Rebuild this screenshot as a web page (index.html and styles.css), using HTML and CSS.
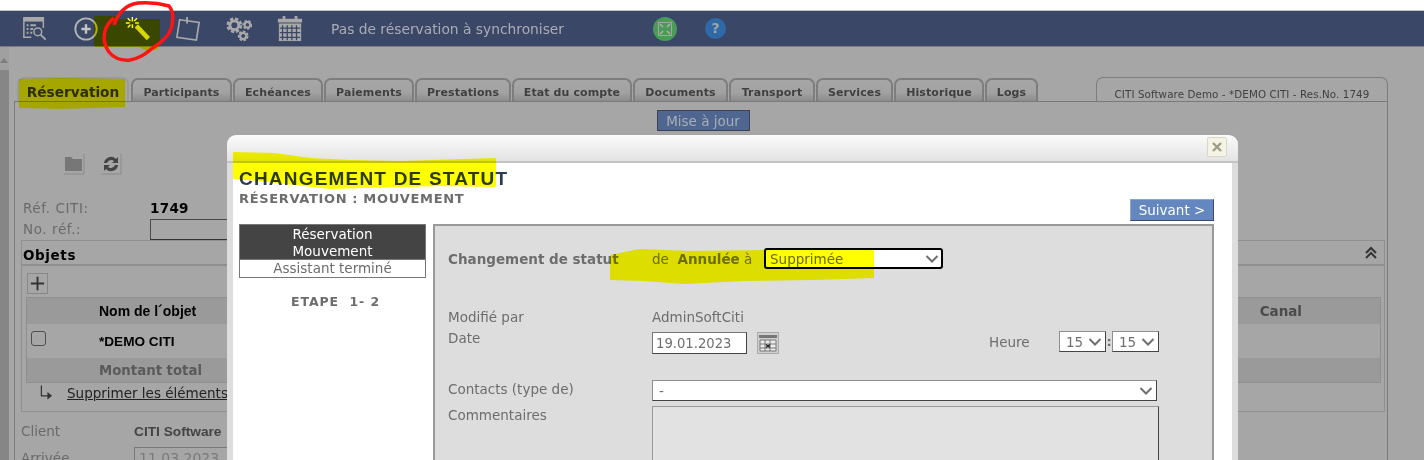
FILE: index.html
```html
<!DOCTYPE html>
<html lang="fr">
<head>
<meta charset="utf-8">
<title>Changement de statut</title>
<link rel="stylesheet" href="styles.css">
</head>
<body>
<div class="page">
  <div class="topgap"></div>
  <header class="toolbar">
    <svg class="tool" viewBox="0 0 28 28"><g fill="none" stroke="#a8a8a8" stroke-width="1.6"><path d="M10 23H2V2h21v11"/></g><path d="M2 2h21v4H2z" fill="#a8a8a8"/><path d="M5 9h2v2H5zM9 9h6v2H9zM5 13h2v2H5zM9 13h3v2H9zM5 17h2v2H5zM9 17h2v2H9z" fill="#a8a8a8"/><circle cx="17" cy="17" r="4.2" fill="none" stroke="#a8a8a8" stroke-width="1.6"/><path d="M20 20l5.5 5.5" stroke="#a8a8a8" stroke-width="2"/></svg>
    <svg class="tool" viewBox="0 0 28 28"><circle cx="14" cy="14" r="11.5" fill="none" stroke="#b4b4b4" stroke-width="2"/><path d="M14 9v10M9 14h10" stroke="#c4c4c4" stroke-width="2.6"/></svg>
    <svg class="tool" viewBox="0 0 28 28"><path d="M11.500 12.500l3.500-3.500 13 13.500-3.500 3.500z" fill="#d8d84a"/><path d="M9 1v5M9 9v4M2 7.500h4M12 7.500h4M4 2.500l3 3M14 2.500l-3 3M4 12.500l3-3" stroke="#ffff80" stroke-width="1.500" fill="none"/></svg>
    <svg class="tool" viewBox="0 0 28 28"><path d="M5 4l21 3-3 19-21-3z" fill="none" stroke="#a8a8a8" stroke-width="1.800"/><path d="M13 1v7" stroke="#a8a8a8" stroke-width="2"/></svg>
    <svg class="tool" viewBox="0 0 28 28"><g fill="none" stroke="#a8a8a8"><circle cx="9" cy="10" r="6" stroke-width="5" stroke-dasharray="3 1.700"/><circle cx="9" cy="10" r="4.800" stroke-width="3"/><circle cx="23" cy="9.500" r="3.600" stroke-width="3.400" stroke-dasharray="2.200 1.300"/><circle cx="23" cy="9.500" r="3" stroke-width="2"/><circle cx="18.500" cy="21.500" r="4" stroke-width="3.600" stroke-dasharray="2.300 1.300"/><circle cx="18.500" cy="21.500" r="3.300" stroke-width="2.200"/></g></svg>
    <svg class="tool" viewBox="0 0 28 28"><path d="M1 3h26v4H1z" fill="#a8a8a8"/><path d="M6 0h3v4H6zM19 0h3v4h-3z" fill="#a8a8a8"/><path d="M2 8h24v19H2z" fill="#a8a8a8"/><path d="M6 10v16M11 10v16M16 10v16M21 10v16M3 13h22M3 18h22M3 23h22" stroke="#3a4767" stroke-width="1.400"/></svg>
    <span class="sync">Pas de réservation à synchroniser</span>
    <svg class="round" viewBox="0 0 24 24"><circle cx="12" cy="12" r="12" fill="#4c9a5a"/><rect x="5.500" y="5.500" width="13" height="13" fill="none" stroke="#a5a5a5"/><path d="M7 7l3 3M17 7l-3 3M7 17l3-3M17 17l-3-3" stroke="#b5b5b5" stroke-width="1.300"/></svg>
    <span class="help">?</span>
  </header>
  <div class="content">
    <div class="scrollbar"><span class="scrollbtn"></span></div>
    <main class="work">
      <div class="tabs">
        <span class="tab active">Réservation</span>
        <span class="tab w101">Participants</span>
        <span class="tab w90">Echéances</span>
        <span class="tab w90">Paiements</span>
        <span class="tab w96">Prestations</span>
        <span class="tab w120">Etat du compte</span>
        <span class="tab w95">Documents</span>
        <span class="tab w86">Transport</span>
        <span class="tab w77">Services</span>
        <span class="tab w90">Historique</span>
        <span class="tab w53">Logs</span>
        <span class="infotab">CITI Software Demo - *DEMO CITI - Res.No. 1749</span>
      </div>
      <section class="panel">
        <div class="updatewrap"><button class="update">Mise à jour</button></div>
        <div class="minis">
          <svg class="mini" viewBox="0 0 22 22"><path d="M1 21h20V1" fill="none" stroke="#8a8a8a"/><path d="M2 18V4h6l2 2h9v12z" fill="#777"/></svg>
          <svg class="mini" viewBox="0 0 22 22"><path d="M1 21h20V1" fill="none" stroke="#8a8a8a"/><path d="M4 10a7 7 0 0 1 12-4l2-2v6h-6l2-2a4.500 4.500 0 0 0-7 2zM18 12a7 7 0 0 1-12 4l-2 2v-6h6l-2 2a4.500 4.500 0 0 0 7-2z" fill="#444"/></svg>
        </div>
        <div class="refrow"><span class="lbl">Réf. CITI:</span><b class="refnum">1749</b></div>
        <div class="refrow second"><span class="lbl">No. réf.:</span><span class="refinput"></span></div>
        <section class="objets">
          <div class="objhead"><b>Objets</b><svg class="chev" viewBox="0 0 14 14"><path d="M2 7l5-5 5 5M2 12l5-5 5 5" fill="none" stroke="#333" stroke-width="2"/></svg></div>
          <span class="plus"><svg viewBox="0 0 20 20"><path d="M10 3v14M3 10h14" stroke="#333" stroke-width="2"/></svg></span>
          <div class="table">
            <div class="row headrow"><span class="cellname">Nom de l´objet</span><span class="canal">Canal</span></div>
            <div class="row plain"><span class="check"></span><span class="cellname demo">*DEMO CITI</span></div>
            <div class="row totalrow"><span class="total">Montant total</span></div>
          </div>
          <div class="dellink">
            <svg class="turn" viewBox="0 0 14 16"><path d="M1.500 0v11h8" fill="none" stroke="#333" stroke-width="1.300"/><path d="M8 7l5 4-5 4z" fill="#333"/></svg>
            <a class="del">Supprimer les éléments sélectionnés</a>
          </div>
        </section>
        <div class="clientrow"><span class="lbl">Client</span><b class="client">CITI Software</b></div>
        <div class="clientrow arr"><span class="lbl">Arrivée</span><span class="arrinput">11.03.2023</span></div>
      </section>
    </main>
  </div>
</div>

<div class="modal">
  <div class="modalbar"><span class="close"><svg viewBox="0 0 12 12"><path d="M2 2l8 8M10 2l-8 8" stroke="#9c9c8c" stroke-width="2.400"/></svg></span></div>
  <div class="modalbody">
    <h1 class="mtitle">CHANGEMENT DE STATUT</h1>
    <div class="msub">RÉSERVATION : MOUVEMENT</div>
    <div class="nextwrap"><button class="next">Suivant &gt;</button></div>
    <div class="wizard">
      <aside class="steps">
        <div class="stepbox">
          <div class="stepcur">Réservation<br>Mouvement</div>
          <div class="stepdone">Assistant terminé</div>
        </div>
        <div class="etape">ETAPE&nbsp; 1- 2</div>
      </aside>
      <section class="form">
        <div class="frow statut">
          <b class="flabel">Changement de statut</b>
          <span class="fval">de&nbsp; <b>Annulée</b> à</span>
          <span class="selwrap"><select class="sel focus"><option>Supprimée</option></select><svg class="arrow" viewBox="0 0 14 8"><path d="M1.500 1l5.500 5.500L12.500 1"/></svg></span>
        </div>
        <div class="frow mod"><span class="flabel">Modifié par</span><span class="fval">AdminSoftCiti</span></div>
        <div class="frow daterow">
          <span class="flabel">Date</span>
          <input class="date" value="19.01.2023">
          <svg class="cal" viewBox="0 0 22 22"><rect x="0.500" y="0.500" width="21" height="21" fill="#cfcfcf" stroke="#aaa"/><path d="M2 3h18v3H2z" fill="#777"/><path d="M3 8h16v11H3z" fill="#ececec" stroke="#777"/><path d="M8 8v11M13 8v11M3 12h16M3 16h16" stroke="#777"/><path d="M9 12.500l4 3M13 12.500l-4 3" stroke="#222" stroke-width="1.400"/></svg>
          <span class="heure">Heure</span>
          <span class="selwrap up"><select class="sel time"><option>15</option></select><svg class="arrow" viewBox="0 0 14 8"><path d="M1.500 1l5.500 5.500L12.500 1"/></svg></span>
          <b class="colon">:</b>
          <span class="selwrap up"><select class="sel time"><option>15</option></select><svg class="arrow" viewBox="0 0 14 8"><path d="M1.500 1l5.500 5.500L12.500 1"/></svg></span>
        </div>
        <div class="frow contacts"><span class="flabel">Contacts (type de)</span><span class="selwrap"><select class="sel wide"><option>-</option></select><svg class="arrow" viewBox="0 0 14 8"><path d="M1.500 1l5.500 5.500L12.500 1"/></svg></span></div>
        <div class="frow comments"><span class="flabel">Commentaires</span><textarea class="area"></textarea></div>
      </section>
    </div>
  </div>
</div>

<svg class="ink" viewBox="0 0 1424 460" aria-hidden="true">
  <g class="marker">
    <path class="hl" d="M94 16h23l2 3h41v27l-4 4-9 1-8-4H94z"/>
    <path class="hl" d="M19 79l42-1 64 1v28l-62 2-44-1z"/>
    <path class="hl" d="M233 152l42 1 35 5 40 2 50 1 96-3v29l-56-1-110 3-71-8-26-2z"/>
    <path class="hl" d="M610 255l30-6 50 2 74-1h110v28l-60 2-70 1-60 3-40-3-34-1z"/>
  </g>
  <path class="redring" d="M114 25C118 14 124 5 138 3c12-1 24 1 31 3 5 6 4 16 2 23-3 8-9 13-17 18-7 5-12 11-24 13-10 1-17-3-21-8-5-7-6-16-3-24 2-4 4-7 8-10"/>
</svg>
</body>
</html>
```
FILE: styles.css
```css
* { box-sizing: border-box; }
html, body { margin: 0; height: 460px; overflow: hidden; background: #fff; }
body { font-family: "DejaVu Sans", Verdana, sans-serif; font-size: 13px; color: #6f6f6f; position: relative; }
.page { width: 1424px; height: 460px; display: flex; flex-direction: column; }
.topgap { height: 11px; background: #fff; border-bottom: 1px solid #c4c4c4; flex: none; }
.toolbar { height: 36px; flex: none; background: #3a4767; border-bottom: 1px solid #7d7d7d; display: flex; align-items: center; padding-left: 22px; }
.tool { width: 26px; height: 26px; margin-right: 25px; flex: none; }
.sync { color: #a9adb4; font-size: 13.800px; margin-left: 3px; width: 322px; white-space: nowrap; }
.round { width: 24px; height: 24px; flex: none; }
.help { width: 21px; height: 21px; border-radius: 50%; background: #2f69a8; color: #a6a6a6; font-weight: bold; font-size: 14px; text-align: center; line-height: 21px; margin-left: 28px; }
.content { flex: 1; display: flex; background: #a6a6a6; min-height: 0; }
.scrollbar { width: 9px; flex: none; background: #868686; }
.scrollbtn { display: block; height: 23px; background: #a0a0a0; position: relative; }
.scrollbtn::after { content: ""; position: absolute; left: 0; top: 11px; border: 4px solid transparent; border-top: 0; border-bottom: 5px solid #7c7c7c; }
.work { flex: 1; padding: 30px 36px 0 5px; min-width: 0; }
.tabs { display: flex; height: 24px; align-items: flex-end; padding-left: 3px; gap: 1px; }
.tab { height: 23px; background: linear-gradient(#a6a6a6, #a2a2a2 60%, #8c8c8c); border: 2px solid #7d7d7d; border-bottom: 0; border-radius: 7px 7px 0 0; font-weight: bold; font-size: 11px; letter-spacing: .1px; color: #3f3f3f; text-align: center; line-height: 25px; flex: none; white-space: nowrap; }
.tab.active { width: 112px; height: 24px; background: #a6a6a6; font-size: 13.700px; color: #2d2d00; line-height: 26px; margin-right: 1px; border-color: #9a9a9a; letter-spacing: 0; }
.w101 { width: 101px; } .w90 { width: 90px; } .w96 { width: 96px; } .w120 { width: 120px; } .w95 { width: 95px; }
.w86 { width: 86px; } .w77 { width: 77px; } .w53 { width: 53px; }
.infotab { margin-left: auto; width: 292px; height: 24px; border: 1px solid #7d7d7d; border-bottom: 0; border-radius: 7px 7px 0 0; font-size: 10.300px; color: #404040; text-align: center; line-height: 33px; white-space: nowrap; letter-spacing: .1px; }
.panel { height: 360px; border: 1px solid #7a7a7a; border-bottom: 0; padding: 0 2px 0 6px; }
.updatewrap { display: flex; justify-content: center; padding: 8px 0 0; height: 30px; }
.update { width: 93px; height: 21px; background: #4f6690; border: 1px solid #3c4252; color: #a9adb4; font: 13.500px "DejaVu Sans", sans-serif; padding: 0; }
.minis { display: flex; gap: 15px; padding: 21px 0 0 42px; height: 65px; }
.mini { width: 22px; height: 22px; flex: none; }
.refrow { display: flex; height: 21px; align-items: center; padding-left: 2px; }
.refrow .lbl { width: 127px; letter-spacing: .6px; }
.lbl { color: #6a6a6a; font-size: 13.500px; white-space: nowrap; }
.refnum { color: #000; font-size: 13.500px; letter-spacing: .3px; }
.refrow.second { height: 22px; }
.refinput { width: 90px; height: 21px; border: 1px solid #4a4a4a; border-right: 0; border-bottom-color: #333; }
.objets { height: 172px; border: 1px solid #8f8f8f; }
.objhead { height: 25px; border-bottom: 2px solid #8f8f8f; display: flex; align-items: center; justify-content: space-between; color: #000; font-size: 13.500px; letter-spacing: .6px; padding: 4px 6px 0 1px; }
.chev { width: 14px; height: 14px; margin-top: -4px; }
.plus { display: block; width: 21px; height: 21px; margin: 7px 0 3px 5px; border: 1px solid #888; }
.plus svg { display: block; width: 19px; height: 19px; }
.table { margin: 0 3px 0 4px; border: 1px solid #8f8f8f; height: 86px; }
.row { display: flex; align-items: center; position: relative; padding-left: 72px; }
.headrow { height: 26px; background: #9a9a9a; }
.plain { height: 34px; }
.totalrow { height: 24px; background: #9a9a9a; }
.cellname { color: #000; font-weight: bold; font-family: "Liberation Sans", Arial, sans-serif; font-size: 14px; white-space: nowrap; }
.canal { margin-left: auto; margin-right: 78px; font-weight: bold; color: #4a4a4a; font-size: 13.500px; font-family: "DejaVu Sans", sans-serif; }
.demo { font-size: 13.600px; }
.check { position: absolute; left: 4px; top: 7px; width: 15px; height: 15px; border: 1px solid #4f4f4f; border-radius: 3px; }
.total { color: #5a5a5a; font-size: 13.300px; font-weight: bold; white-space: nowrap; }
.dellink { display: flex; align-items: center; height: 20px; padding: 0 0 0 18px; gap: 14px; }
.turn { width: 13px; height: 16px; flex: none; }
.del { color: #222; text-decoration: underline; font-size: 13.500px; white-space: nowrap; }
.clientrow { display: flex; align-items: center; height: 22px; margin-top: 8px; }
.clientrow .lbl { width: 113px; }
.client { color: #444; font-family: "Liberation Sans", Arial, sans-serif; font-size: 13.700px; }
.clientrow.arr { margin-top: 5px; }
.arrinput { width: 110px; height: 22px; border: 1px solid #7a7a7a; padding: 2px 4px; color: #7a7a7a; font-size: 14px; }
.modal { position: absolute; left: 227px; top: 135px; width: 1011px; height: 325px; overflow: hidden; background: #ddd; border-radius: 9px 9px 0 0; padding: 0 6px 0 6px; }
.modalbar { height: 28px; margin: 0 -6px; background: linear-gradient(#fbfbfb, #e3e3e3); border-radius: 9px 9px 0 0; border-bottom: 2px solid #c4c4c4; display: flex; justify-content: flex-end; padding: 2px 11px 0 0; }
.close { width: 20px; height: 20px; border: 1px solid #d9d8c6; background: #f4f3e4; border-radius: 2px; display: flex; align-items: center; justify-content: center; }
.close svg { width: 12px; height: 12px; }
.modalbody { background: #fff; height: 297px; padding: 6px 18px 0 6px; }
.mtitle { margin: 0; font-size: 19px; line-height: 20px; color: #2d3a56; font-weight: bold; font-family: "Liberation Sans", Arial, sans-serif; letter-spacing: 1.200px; white-space: nowrap; }
.msub { color: #6d6d6d; font-weight: bold; font-size: 13px; line-height: 16px; letter-spacing: .65px; margin-top: 2px; }
.nextwrap { display: flex; justify-content: flex-end; height: 25px; margin-top: -8px; }
.next { width: 84px; height: 22px; background: #6487bf; border: 1px solid #8ea6c8; border-right-color: #3c4a63; border-bottom-color: #3c4a63; color: #fff; font: 13.500px "DejaVu Sans", sans-serif; padding: 0; }
.wizard { display: flex; gap: 7px; }
.steps { width: 187px; flex: none; }
.stepbox { border: 1px solid #777; }
.stepcur { background: #444; color: #fff; text-align: center; font-size: 13.500px; line-height: 17px; padding-top: 1px; height: 34px; }
.stepdone { text-align: center; border-top: 1px solid #777; font-size: 13.500px; line-height: 17px; color: #6d6d6d; }
.etape { text-align: center; font-weight: bold; color: #6d6d6d; margin-top: 15px; font-size: 12.500px; padding-left: 6px; letter-spacing: .9px; line-height: 18px; }
.form { flex: 1; height: 240px; background: #ddd; border: 2px solid #999; border-bottom: 0; padding: 20px 0 0 13px; }
.frow { display: flex; align-items: center; }
.flabel { width: 204px; flex: none; color: #6d6d6d; font-size: 13.500px; white-space: nowrap; }
.statut { height: 25px; }
.statut .flabel { font-weight: bold; }
.fval { color: #6d6d6d; font-size: 13.500px; white-space: nowrap; }
.statut .fval { width: 112px; flex: none; }
.selwrap { position: relative; display: block; flex: none; height: 21px; }
.selwrap.up { align-self: flex-start; margin-top: -1px; }
.arrow { position: absolute; right: 4px; top: 7px; width: 14px; height: 8px; fill: none; stroke: #6f6f6f; stroke-width: 2; pointer-events: none; }
.sel { display: block; appearance: none; font: 13.500px "DejaVu Sans", sans-serif; background: #fff; border: 1px solid #8e8e8e; border-right-color: #444; border-bottom-color: #444; border-radius: 0; color: #6f6f6f; height: 21px; padding: 0 0 0 6px; }
.focus { width: 179px; border: 2px solid #000; border-radius: 3px; color: #6b6b00; padding-left: 4px; }
.mod { margin-top: 35px; height: 21px; }
.daterow { height: 22px; margin-top: 5px; }
.daterow .flabel { align-self: flex-start; line-height: 12px; }
.date { width: 95px; height: 22px; border: 1px solid #777; border-right-color: #444; border-bottom-color: #444; background: #fff; color: #6f6f6f; font: 13.200px "DejaVu Sans", sans-serif; padding: 1px 3px; }
.cal { width: 22px; height: 22px; margin-left: 10px; flex: none; }
.heure { margin-left: 210px; margin-bottom: 2px; width: 70px; font-size: 13.500px; color: #6d6d6d; }
.time { width: 47px; }
.colon { width: 6px; align-self: flex-start; text-align: center; color: #6d6d6d; line-height: 19px; }
.contacts { margin-top: 26px; height: 21px; }
.contacts .flabel { margin-bottom: 3px; }
.wide { width: 505px; }
.comments { margin-top: 5px; align-items: flex-start; }
.comments .flabel { padding-top: 1px; }
.area { width: 507px; height: 100px; background: #e2e2e2; border: 1px solid #999; border-right-color: #444; display: block; }
.ink { position: absolute; left: 0; top: 0; width: 1424px; height: 460px; pointer-events: none; }
.hl { fill: #ffff00; mix-blend-mode: multiply; }
.redring { fill: none; stroke: #ff1414; stroke-width: 3.500; }
```
